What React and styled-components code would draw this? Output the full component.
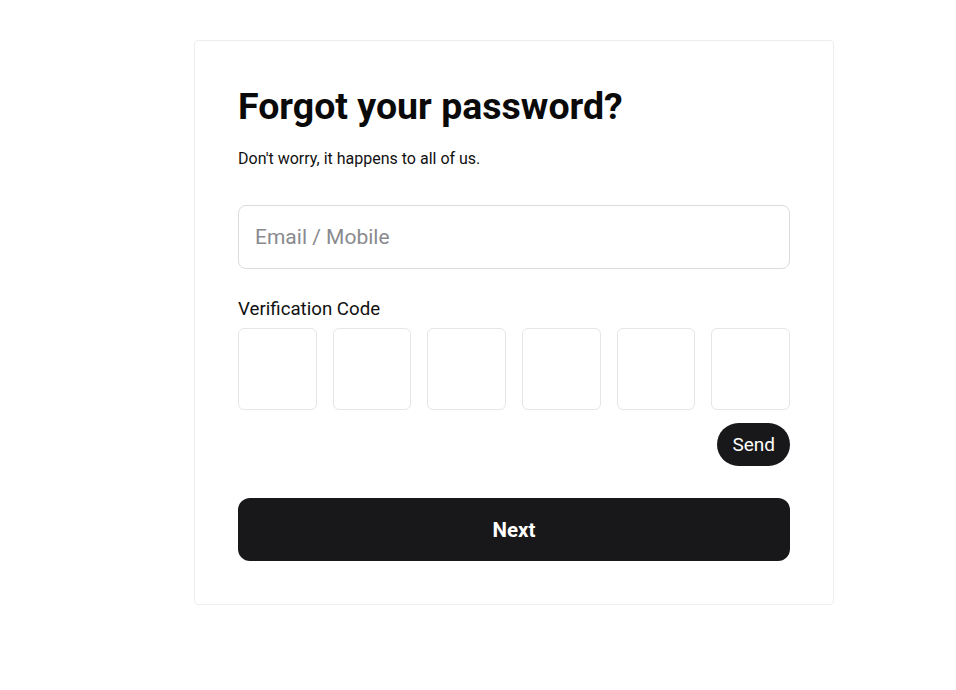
import React from "react";
import styled, { createGlobalStyle } from "styled-components";

const Global = createGlobalStyle`
  html, body { margin: 0; padding: 0; background: #fff; }
  body { font-family: Roboto, "Noto Sans", Arial, sans-serif; color: #0a0a0a; }
  * { box-sizing: border-box; }
`;

const Page = styled.div`
  padding: 40px 0 0 194px;
`;

const Card = styled.div`
  width: 640px;
  border: 1px solid #ededed;
  border-radius: 4px;
  padding: 43px;
  background: #fff;
  display: flex;
  flex-direction: column;
`;

const Title = styled.h1`
  margin: 0;
  font-size: 37.5px;
  font-weight: 700;
  line-height: 44px;
  color: #0a0a0a;
`;

const Subtitle = styled.p`
  margin: 19px 0 0;
  font-size: 16px;
  line-height: 24px;
  color: #111;
`;

const TextInput = styled.input`
  margin-top: 34px;
  width: 100%;
  height: 64px;
  border: 1px solid #dcdcdc;
  border-radius: 8px;
  padding: 0 16px;
  font-family: inherit;
  font-size: 21px;
  color: #111;
  outline: none;
  &::placeholder { color: #8a8a8e; }
`;

const Label = styled.label`
  margin-top: 28px;
  font-size: 18.7px;
  line-height: 24px;
  color: #111;
`;

const CodeRow = styled.div`
  margin-top: 7px;
  display: grid;
  grid-template-columns: repeat(6, 1fr);
  gap: 16px;
`;

const CodeBox = styled.input`
  width: 100%;
  height: 82px;
  border: 1px solid #e6e6e6;
  border-radius: 6px;
  outline: none;
  text-align: center;
  font-family: inherit;
  font-size: 28px;
`;

const SendRow = styled.div`
  margin-top: 13px;
  display: flex;
  justify-content: flex-end;
`;

const SendButton = styled.button`
  height: 43px;
  padding: 0 15px;
  border: none;
  border-radius: 22px;
  background: #18181a;
  color: #fff;
  font-family: inherit;
  font-size: 19px;
  cursor: pointer;
`;

const NextButton = styled.button`
  margin-top: 32px;
  height: 63px;
  width: 100%;
  border: none;
  border-radius: 12px;
  background: #18181a;
  color: #fff;
  font-family: inherit;
  font-size: 20.5px;
  font-weight: 700;
  cursor: pointer;
`;

export default function App() {
  return (
    <>
      <Global />
      <Page>
        <Card>
          <Title>Forgot your password?</Title>
          <Subtitle>Don't worry, it happens to all of us.</Subtitle>
          <TextInput placeholder="Email / Mobile" />
          <Label>Verification Code</Label>
          <CodeRow>
            {Array.from({ length: 6 }).map((_, i) => (
              <CodeBox key={i} maxLength={1} />
            ))}
          </CodeRow>
          <SendRow>
            <SendButton>Send</SendButton>
          </SendRow>
          <NextButton>Next</NextButton>
        </Card>
      </Page>
    </>
  );
}
